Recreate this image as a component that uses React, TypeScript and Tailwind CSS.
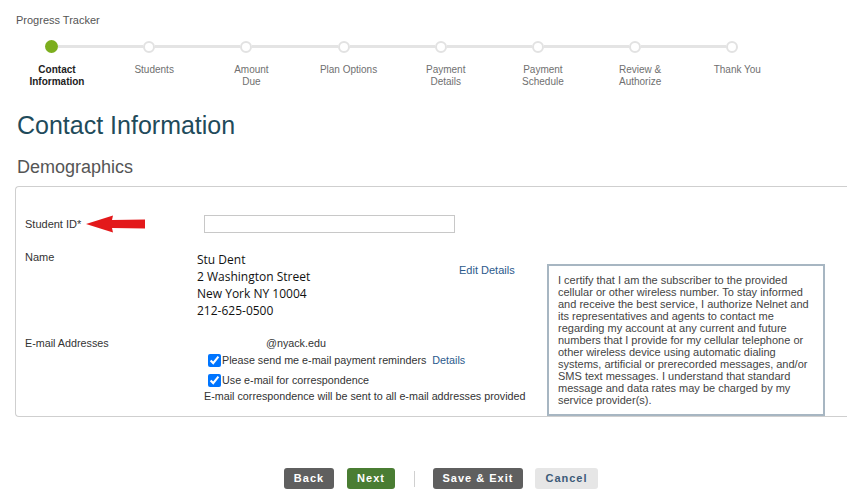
import React from 'react';

const steps = [
  ['Contact', 'Information'],
  ['Students'],
  ['Amount', 'Due'],
  ['Plan Options'],
  ['Payment', 'Details'],
  ['Payment', 'Schedule'],
  ['Review &', 'Authorize'],
  ['Thank You'],
];

const certLines = [
  'I certify that I am the subscriber to the provided',
  'cellular or other wireless number. To stay informed',
  'and receive the best service, I authorize Nelnet and',
  'its representatives and agents to contact me',
  'regarding my account at any current and future',
  'numbers that I provide for my cellular telephone or',
  'other wireless device using automatic dialing',
  'systems, artificial or prerecorded messages, and/or',
  'SMS text messages. I understand that standard',
  'message and data rates may be charged by my',
  'service provider(s).',
];

const ProgressTracker: React.FC = () => (
  <div className="flex pl-[3.4px] mt-[13px]">
    {steps.map((label, i) => (
      <div key={i} className="w-[97.2px] flex flex-col">
        <div className="flex items-center h-[13px]">
          <div className={`flex-1 h-[3px] ${i === 0 ? '' : 'bg-[#e4e4e4]'}`} />
          {i === 0 ? (
            <div className="w-[13px] h-[13px] rounded-full bg-[#7cae1e]" />
          ) : (
            <div className="w-[12px] h-[12px] rounded-full border-2 border-[#e2e2e2] bg-white" />
          )}
          <div className={`flex-1 h-[3px] ${i === steps.length - 1 ? '' : 'bg-[#e4e4e4]'}`} />
        </div>
        <div
          className={`mt-[11px] pl-[10px] text-center text-[10px] leading-[12px] ${
            i === 0 ? 'font-bold text-[#222]' : 'text-[#707070]'
          }`}
        >
          {label.map((l, j) => (
            <div key={j} className="whitespace-nowrap">{l}</div>
          ))}
        </div>
      </div>
    ))}
  </div>
);

const RedArrow: React.FC = () => (
  <svg width="60" height="18" viewBox="0 0 60 18" className="ml-[5px]">
    <path d="M0 9 L27 0.5 L26 5 L59 4.5 L59 13.5 L26 13 L27 17.5 Z" fill="#e3191b" />
  </svg>
);

const App: React.FC = () => {
  return (
    <div className="w-[847px] h-[504px] overflow-hidden bg-white text-[#333] font-['Liberation_Sans',Arial,sans-serif]">
      <div className="pt-[14px] pl-[16px] text-[11px] leading-[13px] text-[#555]">Progress Tracker</div>

      <ProgressTracker />

      <h1 className="mt-[22px] pl-[17px] text-[25px] leading-[30px] text-[#1f4b5b]">Contact Information</h1>
      <h2 className="mt-[16px] pl-[17px] text-[18px] leading-[22px] text-[#555]">Demographics</h2>

      <div className="mt-[8px] ml-[15px] border border-r-0 border-[#cfcfcf] rounded-l-[4px] pl-[9px] pt-[28px]">
        {/* Student ID */}
        <div className="flex items-center">
          <div className="w-[179px] flex items-center text-[11px] leading-[13px]">
            <span>Student ID*</span>
            <RedArrow />
          </div>
          <input className="w-[251px] h-[18px] border border-[#c8c8c8] outline-none" />
        </div>

        <div className="flex">
          <div className="w-[522px]">
            {/* Name */}
            <div className="flex mt-[18px]">
              <div className="w-[172px] text-[11px] leading-[13px]">Name</div>
              <div className="w-[262px] font-['Open_Sans',sans-serif] text-[12px] leading-[17px] text-[#111]">
                <div>Stu Dent</div>
                <div>2 Washington Street</div>
                <div>New York NY 10004</div>
                <div>212-625-0500</div>
              </div>
              <a className="mt-[13px] text-[11px] leading-[13px] text-[#2b5a8c] whitespace-nowrap">Edit Details</a>
            </div>

            {/* E-mail */}
            <div className="flex mt-[18px] text-[10.75px] leading-[13px]">
              <div className="w-[179px]">E-mail Addresses</div>
              <div>
                <div className="pl-[62px]">@nyack.edu</div>
                <label className="flex items-center h-[16px] mt-[2.5px] pl-[4px]">
                  <input type="checkbox" defaultChecked className="m-0 mr-[1px] w-[13px] h-[13px] accent-[#0075ff]" />
                  <span>Please send me e-mail payment reminders</span>
                  <a className="ml-[6px] text-[#2b5a8c]">Details</a>
                </label>
                <label className="flex items-center h-[16px] mt-[4px] pl-[4px]">
                  <input type="checkbox" defaultChecked className="m-0 mr-[1px] w-[13px] h-[13px] accent-[#0075ff]" />
                  <span>Use e-mail for correspondence</span>
                </label>
                <div className="mt-[1.5px] whitespace-nowrap">E-mail correspondence will be sent to all e-mail addresses provided</div>
              </div>
            </div>
          </div>

          {/* certification */}
          <div className="mt-[31px] w-[278px] h-[152px] border-2 border-[#a7b6c2] px-[9px] py-[8px] text-[11px] leading-[12px] text-[#444]">
            {certLines.map((l, i) => (
              <div key={i} className="whitespace-nowrap">{l}</div>
            ))}
          </div>
        </div>
      </div>

      {/* buttons */}
      <div className="flex items-center mt-[51px] pl-[284px] text-[11px] font-bold tracking-[1px]">
        <button className="w-[50px] h-[21px] rounded-[3px] bg-[#5f5f5f] text-white">Back</button>
        <button className="ml-[13px] w-[48px] h-[21px] rounded-[3px] bg-[#4a7d33] text-white">Next</button>
        <div className="ml-[19px] w-px h-[16px] bg-[#d0d0d0]" />
        <button className="ml-[18px] w-[90px] h-[21px] rounded-[3px] bg-[#5f5f5f] text-white">Save &amp; Exit</button>
        <button className="ml-[12px] w-[63px] h-[21px] rounded-[3px] bg-[#e6e6e6] text-[#3b5a78]">Cancel</button>
      </div>
    </div>
  );
};

export default App;
